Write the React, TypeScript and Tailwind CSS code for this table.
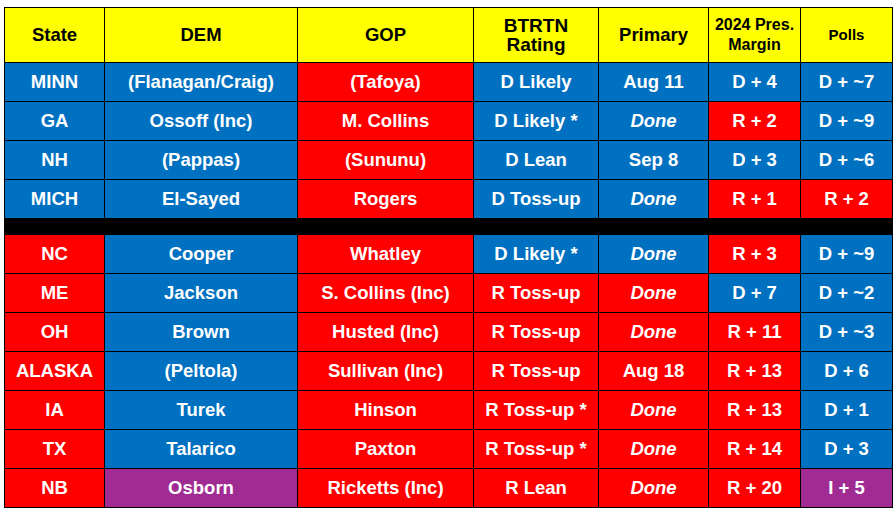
import React from "react";

type Party = "D" | "R" | "I";

type Race = {
  state: [string, Party];
  dem: [string, Party];
  gop: [string, Party];
  rating: [string, Party];
  primary: [string, Party];
  margin: [string, Party];
  polls: [string, Party];
};

const bg: Record<Party, string> = {
  D: "bg-[#0070c0]",
  R: "bg-[#ff0000]",
  I: "bg-[#a02b93]",
};

// first block: held / leaning dem, second block: gop-held pickups
const topRaces: Race[] = [
  {
    state: ["MINN", "D"],
    dem: ["(Flanagan/Craig)", "D"],
    gop: ["(Tafoya)", "R"],
    rating: ["D Likely", "D"],
    primary: ["Aug 11", "D"],
    margin: ["D + 4", "D"],
    polls: ["D + ~7", "D"],
  },
  {
    state: ["GA", "D"],
    dem: ["Ossoff (Inc)", "D"],
    gop: ["M. Collins", "R"],
    rating: ["D Likely *", "D"],
    primary: ["Done", "D"],
    margin: ["R + 2", "R"],
    polls: ["D + ~9", "D"],
  },
  {
    state: ["NH", "D"],
    dem: ["(Pappas)", "D"],
    gop: ["(Sununu)", "R"],
    rating: ["D Lean", "D"],
    primary: ["Sep 8", "D"],
    margin: ["D + 3", "D"],
    polls: ["D + ~6", "D"],
  },
  {
    state: ["MICH", "D"],
    dem: ["El-Sayed", "D"],
    gop: ["Rogers", "R"],
    rating: ["D Toss-up", "D"],
    primary: ["Done", "D"],
    margin: ["R + 1", "R"],
    polls: ["R + 2", "R"],
  },
];

const bottomRaces: Race[] = [
  {
    state: ["NC", "R"],
    dem: ["Cooper", "D"],
    gop: ["Whatley", "R"],
    rating: ["D Likely *", "D"],
    primary: ["Done", "D"],
    margin: ["R + 3", "R"],
    polls: ["D + ~9", "D"],
  },
  {
    state: ["ME", "R"],
    dem: ["Jackson", "D"],
    gop: ["S. Collins (Inc)", "R"],
    rating: ["R Toss-up", "R"],
    primary: ["Done", "R"],
    margin: ["D + 7", "D"],
    polls: ["D + ~2", "D"],
  },
  {
    state: ["OH", "R"],
    dem: ["Brown", "D"],
    gop: ["Husted (Inc)", "R"],
    rating: ["R Toss-up", "R"],
    primary: ["Done", "R"],
    margin: ["R + 11", "R"],
    polls: ["D + ~3", "D"],
  },
  {
    state: ["ALASKA", "R"],
    dem: ["(Peltola)", "D"],
    gop: ["Sullivan (Inc)", "R"],
    rating: ["R Toss-up", "R"],
    primary: ["Aug 18", "R"],
    margin: ["R + 13", "R"],
    polls: ["D + 6", "D"],
  },
  {
    state: ["IA", "R"],
    dem: ["Turek", "D"],
    gop: ["Hinson", "R"],
    rating: ["R Toss-up *", "R"],
    primary: ["Done", "R"],
    margin: ["R + 13", "R"],
    polls: ["D + 1", "D"],
  },
  {
    state: ["TX", "R"],
    dem: ["Talarico", "D"],
    gop: ["Paxton", "R"],
    rating: ["R Toss-up *", "R"],
    primary: ["Done", "R"],
    margin: ["R + 14", "R"],
    polls: ["D + 3", "D"],
  },
  {
    state: ["NB", "R"],
    dem: ["Osborn", "I"],
    gop: ["Ricketts (Inc)", "R"],
    rating: ["R Lean", "R"],
    primary: ["Done", "R"],
    margin: ["R + 20", "R"],
    polls: ["I + 5", "I"],
  },
];

const cols: (keyof Race)[] = ["state", "dem", "gop", "rating", "primary", "margin", "polls"];

function Cell({ text, party, italic }: { text: string; party: Party; italic?: boolean }) {
  return (
    <div
      className={`${bg[party]} h-[38px] flex items-center justify-center text-white text-[18.5px] font-bold whitespace-nowrap ${
        italic ? "italic" : ""
      }`}
    >
      {text}
    </div>
  );
}

function Rows({ races }: { races: Race[] }) {
  return (
    <>
      {races.map((r) =>
        cols.map((c) => (
          <Cell
            key={r.state[0] + c}
            text={r[c][0]}
            party={r[c][1]}
            italic={c === "primary" && r[c][0] === "Done"}
          />
        ))
      )}
    </>
  );
}

export default function App() {
  return (
    <div className="w-[896px] h-[510px] bg-white pt-[7px] pl-[4px]" style={{ fontFamily: '"Liberation Sans", Arial, sans-serif' }}>
      <div className="inline-grid grid-cols-[99px_192px_175px_124px_109px_91px_91px] gap-px p-px bg-black">
        <div className="bg-[#ffff00] h-[54px] flex items-center justify-center text-[18.5px] font-bold text-black">State</div>
        <div className="bg-[#ffff00] h-[54px] flex items-center justify-center text-[18.5px] font-bold text-black">DEM</div>
        <div className="bg-[#ffff00] h-[54px] flex items-center justify-center text-[18.5px] font-bold text-black">GOP</div>
        <div className="bg-[#ffff00] h-[54px] flex flex-col items-center justify-center text-[19px] leading-[19px] font-bold text-black">
          <span>BTRTN</span>
          <span>Rating</span>
        </div>
        <div className="bg-[#ffff00] h-[54px] flex items-center justify-center text-[18.5px] font-bold text-black">Primary</div>
        <div className="bg-[#ffff00] h-[54px] flex flex-col items-center justify-center text-[16px] leading-[20px] font-bold text-black">
          <span>2024 Pres.</span>
          <span>Margin</span>
        </div>
        <div className="bg-[#ffff00] h-[54px] flex items-center justify-center text-[15px] font-bold text-black">Polls</div>

        <Rows races={topRaces} />
        <div className="col-span-7 h-[15px] bg-black" />
        <Rows races={bottomRaces} />
      </div>
    </div>
  );
}
